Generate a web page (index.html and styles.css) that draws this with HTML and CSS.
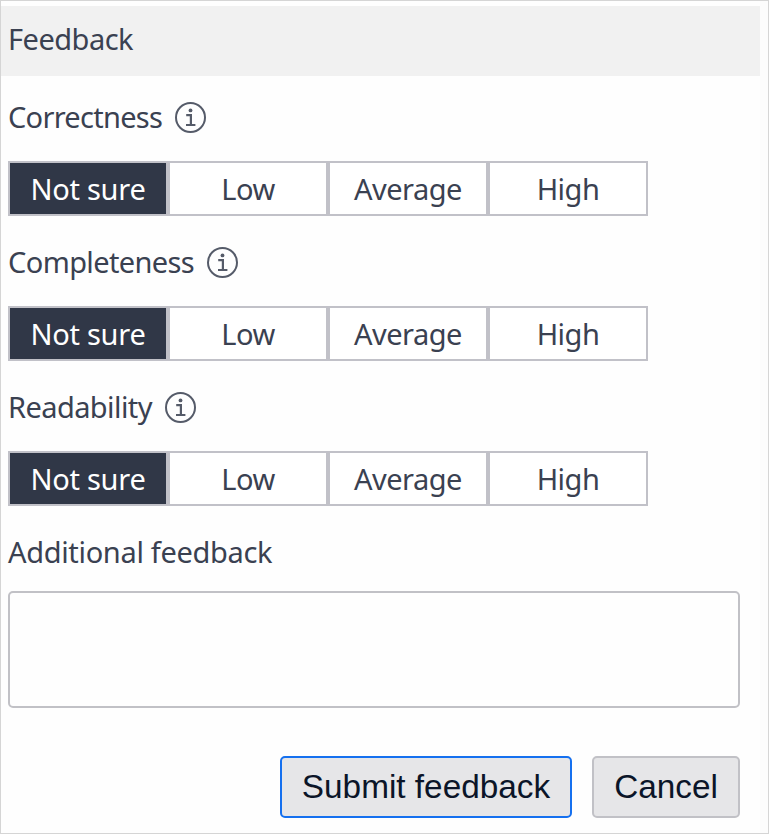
FILE: index.html
```html
<!DOCTYPE html>
<html lang="en">
<head>
<meta charset="utf-8">
<title>Feedback</title>
<link rel="stylesheet" href="styles.css">
</head>
<body>
<svg class="sprite" aria-hidden="true">
  <symbol id="info" viewBox="0 0 31 31">
    <circle cx="15.5" cy="15.5" r="14.5" fill="none" stroke="currentColor" stroke-width="2"/>
    <circle cx="15.5" cy="8.4" r="1.9" fill="currentColor"/>
    <path d="M11.2 13.2H15.9V23M11 23H20.4" fill="none" stroke="currentColor" stroke-width="2.2"/>
  </symbol>
</svg>
<main class="panel">
  <form class="content">
    <h1 class="header"><span class="w-feedback">Feedback</span></h1>
    <section class="question">
      <div class="label"><span class="w-correctness">Correctness</span><svg class="info"><use href="#info"/></svg></div>
      <div class="options">
        <button type="button" class="option selected"><span class="w-notsure">Not sure</span></button><button type="button" class="option"><span class="w-low">Low</span></button><button type="button" class="option"><span class="w-average">Average</span></button><button type="button" class="option"><span class="w-high">High</span></button>
      </div>
    </section>
    <section class="question">
      <div class="label"><span class="w-completeness">Completeness</span><svg class="info"><use href="#info"/></svg></div>
      <div class="options">
        <button type="button" class="option selected"><span class="w-notsure">Not sure</span></button><button type="button" class="option"><span class="w-low">Low</span></button><button type="button" class="option"><span class="w-average">Average</span></button><button type="button" class="option"><span class="w-high">High</span></button>
      </div>
    </section>
    <section class="question">
      <div class="label"><span class="w-readability">Readability</span><svg class="info"><use href="#info"/></svg></div>
      <div class="options">
        <button type="button" class="option selected"><span class="w-notsure">Not sure</span></button><button type="button" class="option"><span class="w-low">Low</span></button><button type="button" class="option"><span class="w-average">Average</span></button><button type="button" class="option"><span class="w-high">High</span></button>
      </div>
    </section>
    <label class="label comment-label" for="comment"><span class="w-additional">Additional feedback</span></label>
    <textarea id="comment" class="comment"></textarea>
    <div class="actions">
      <button type="button" class="action primary">Submit feedback</button>
      <button type="button" class="action">Cancel</button>
    </div>
  </form>
</main>
</body>
</html>
```
FILE: styles.css
```css
* { box-sizing: border-box; }
body {
  margin: 0;
  font-family: "Noto Sans", "Open Sans", sans-serif;
  font-size: 29px;
  color: #3a4151;
}
.sprite { display: none; }
.panel {
  height: 834px;
  border: 1px solid #d5d5d5;
  padding: 5px 8px 0 0;
  background: linear-gradient(to left, #fcfcfc 8px, #fefefe 8px);
  overflow: hidden;
}
.content { display: flex; flex-direction: column; }
.header {
  height: 70px;
  margin: 0 0 -5px;
  padding-left: 7px;
  background: #f1f1f1;
  font-size: inherit;
  font-weight: 400;
  line-height: 66px;
}
.question { padding: 27px 7px 0; }
.label {
  display: flex;
  align-items: center;
  height: 40px;
  line-height: 38px;
  white-space: nowrap;
}
.label span { margin-top: -2px; }
.info {
  width: 31px;
  height: 31px;
  margin: -1px 0 0 13px;
  color: #555b69;
}
.options { display: flex; margin-top: 23px; }
.option {
  width: 160px;
  height: 55px;
  padding: 0;
  border: 2px solid #c1c1c8;
  background: #fff;
  color: #3a4151;
  font: inherit;
  line-height: 51px;
}
.option.selected { background: #303747; color: #fff; }
.w-feedback { letter-spacing: -0.5px; }
.w-correctness { letter-spacing: -0.72px; }
.w-completeness { letter-spacing: -0.62px; }
.w-readability { letter-spacing: -0.58px; }
.w-additional { letter-spacing: -0.33px; }
.w-notsure { letter-spacing: -0.28px; }
.w-average { letter-spacing: -0.5px; }
.w-low, .w-high { letter-spacing: -0.5px; }
.comment-label { margin: 27px 7px 18px; }
.comment {
  display: block;
  width: 732px;
  height: 117px;
  margin-left: 7px;
  border: 2px solid #c1c1c6;
  border-radius: 5px;
  background: #fefefe;
  resize: none;
}
.actions {
  display: flex;
  justify-content: flex-end;
  gap: 20px;
  margin: 48px 20px 0 0;
}
.action {
  width: 148px;
  height: 62px;
  padding: 0;
  border: 2px solid #c1c1c6;
  border-radius: 5px;
  background: #e6e6e8;
  color: #0b1528;
  font: 33.33px "Liberation Sans", sans-serif;
}
.action.primary { width: 292px; border-color: #1570ef; }
```
